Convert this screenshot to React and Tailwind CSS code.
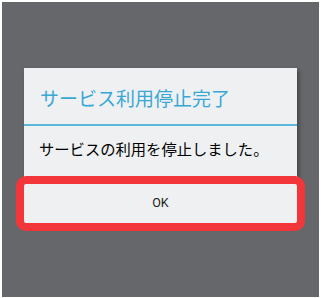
import React from 'react';

function App() {
  return (
    <div className="w-[321px] h-[298px] bg-white pt-[2px] pl-[2px] pr-[2px] pb-[1px]" style={{ fontFamily: '"Noto Sans CJK JP", "Noto Sans", sans-serif' }}>
      <div className="w-full h-full bg-[#66676b] overflow-hidden">
        <div className="ml-[22px] mt-[66px] w-[273px] bg-[#eff0f1] shadow-[2px_2px_4px_rgba(0,0,0,0.35)]">
          <div className="h-[56px] flex items-center pl-[16px] pt-[2px]">
            <span className="text-[19px] leading-none text-[#37a8d6]">サービス利用停止完了</span>
          </div>
          <div className="h-[2px] bg-[#5bb8dc]" />
          <div className="h-[58px] pl-[15px] pt-[10px]">
            <span className="text-[15.3px] leading-[18px] text-black">サービスの利用を停止しました。</span>
          </div>
          <div className="relative h-[39px] flex items-center justify-center">
            <span className="text-[12.5px] text-[#1a1a1a]" style={{ fontFamily: 'Roboto, "Noto Sans", sans-serif' }}>OK</span>
            <div className="absolute -left-[8px] -right-[8px] -top-[8px] -bottom-[8px] border-[8px] border-[#f2363a] rounded-[10px]" />
          </div>
        </div>
      </div>
    </div>
  );
}

export default App;
